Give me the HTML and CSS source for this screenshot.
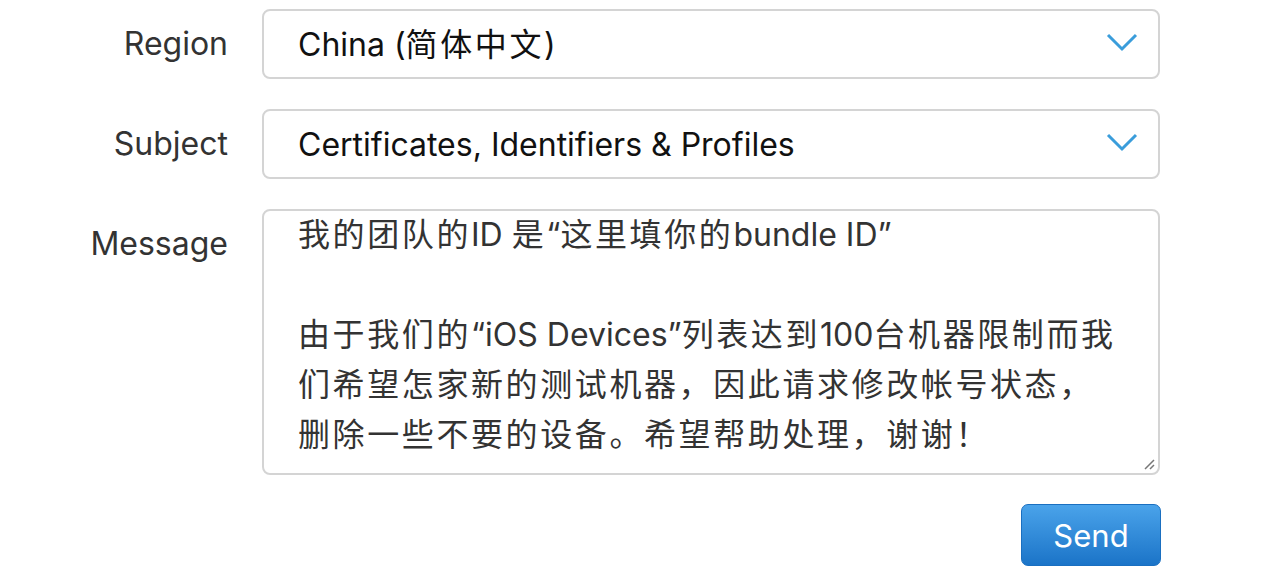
FILE: index.html
```html
<!DOCTYPE html>
<html>
<head>
<meta charset="utf-8">
<link rel="stylesheet" href="styles.css">
</head>
<body>
<form class="form">
  <div class="label">Region</div>
  <div class="select">
    <span class="value">China (<span class="c">简体中文</span>)</span>
    <svg class="chev" width="32" height="20" viewBox="0 0 32 20"><path d="M2 2 L16 16 L30 2" fill="none" stroke="#3a9ddb" stroke-width="3"/></svg>
  </div>
  <div class="label">Subject</div>
  <div class="select">
    <span class="value">Certificates, Identifiers &amp; Profiles</span>
    <svg class="chev" width="32" height="20" viewBox="0 0 32 20"><path d="M2 2 L16 16 L30 2" fill="none" stroke="#3a9ddb" stroke-width="3"/></svg>
  </div>
  <div class="label">Message</div>
  <div class="textarea">
    <div class="text"><span class="c">我的团队的</span>ID <span class="c">是</span>“<span class="c">这里填你的</span>bundle ID”

<span class="c">由于我们的</span>“iOS Devices”<span class="c">列表达到</span>100<span class="c">台机器限制而我</span>
<span class="c">们希望怎家新的测试机器，因此请求修改帐号状态，</span>
<span class="c">删除一些不要的设备。希望帮助处理，谢谢！</span></div>
    <svg class="grip" width="12" height="12" viewBox="0 0 12 12"><path d="M11 2 L2 11 M11 7 L7 11" stroke="#777" stroke-width="1.5"/></svg>
  </div>
  <div></div>
  <div class="actions"><button type="button" class="send">Send</button></div>
</form>
</body>
</html>
```
FILE: styles.css
```css
html, body { margin: 0; padding: 0; background: #fff; }
body {
  font-family: Inter, "Noto Sans CJK SC", sans-serif;
  -webkit-font-smoothing: antialiased;
}
.form {
  display: grid;
  grid-template-columns: 228px 898px;
  column-gap: 34px;
  row-gap: 30px;
  padding-top: 9px;
}
.label {
  text-align: right;
  font-size: 32px;
  color: #333;
  height: 70px;
  line-height: 70px;
}
.select {
  box-sizing: border-box;
  height: 70px;
  border: 2px solid #d4d4d4;
  border-radius: 8px;
  display: flex;
  align-items: center;
  justify-content: space-between;
  padding: 0 20px 0 34px;
}
.value {
  font-size: 32px;
  color: #111;
}
.c {
  font-family: "Noto Sans CJK SC", sans-serif;
  letter-spacing: 2.6px;
  line-height: 1;
}
.chev { display: block; margin-top: -2px; }
.textarea {
  position: relative;
  box-sizing: border-box;
  height: 266px;
  border: 2px solid #d4d4d4;
  border-radius: 8px;
  padding: 0 34px;
  overflow: hidden;
}
.text {
  white-space: pre;
  font-size: 32px;
  line-height: 50px;
  color: #333;
  margin-top: -1px;
}
.grip { position: absolute; right: 3px; bottom: 3px; }
.actions {
  display: flex;
  justify-content: flex-end;
  margin-top: -1px;
  margin-right: -1px;
}
.send {
  box-sizing: border-box;
  width: 140px;
  height: 62px;
  border: 1px solid #1a6fc0;
  border-radius: 7px;
  background: linear-gradient(#4aa3ea, #1b74c8);
  color: #fff;
  font-family: Inter, sans-serif;
  font-size: 31px;
  padding: 0;
}
```
